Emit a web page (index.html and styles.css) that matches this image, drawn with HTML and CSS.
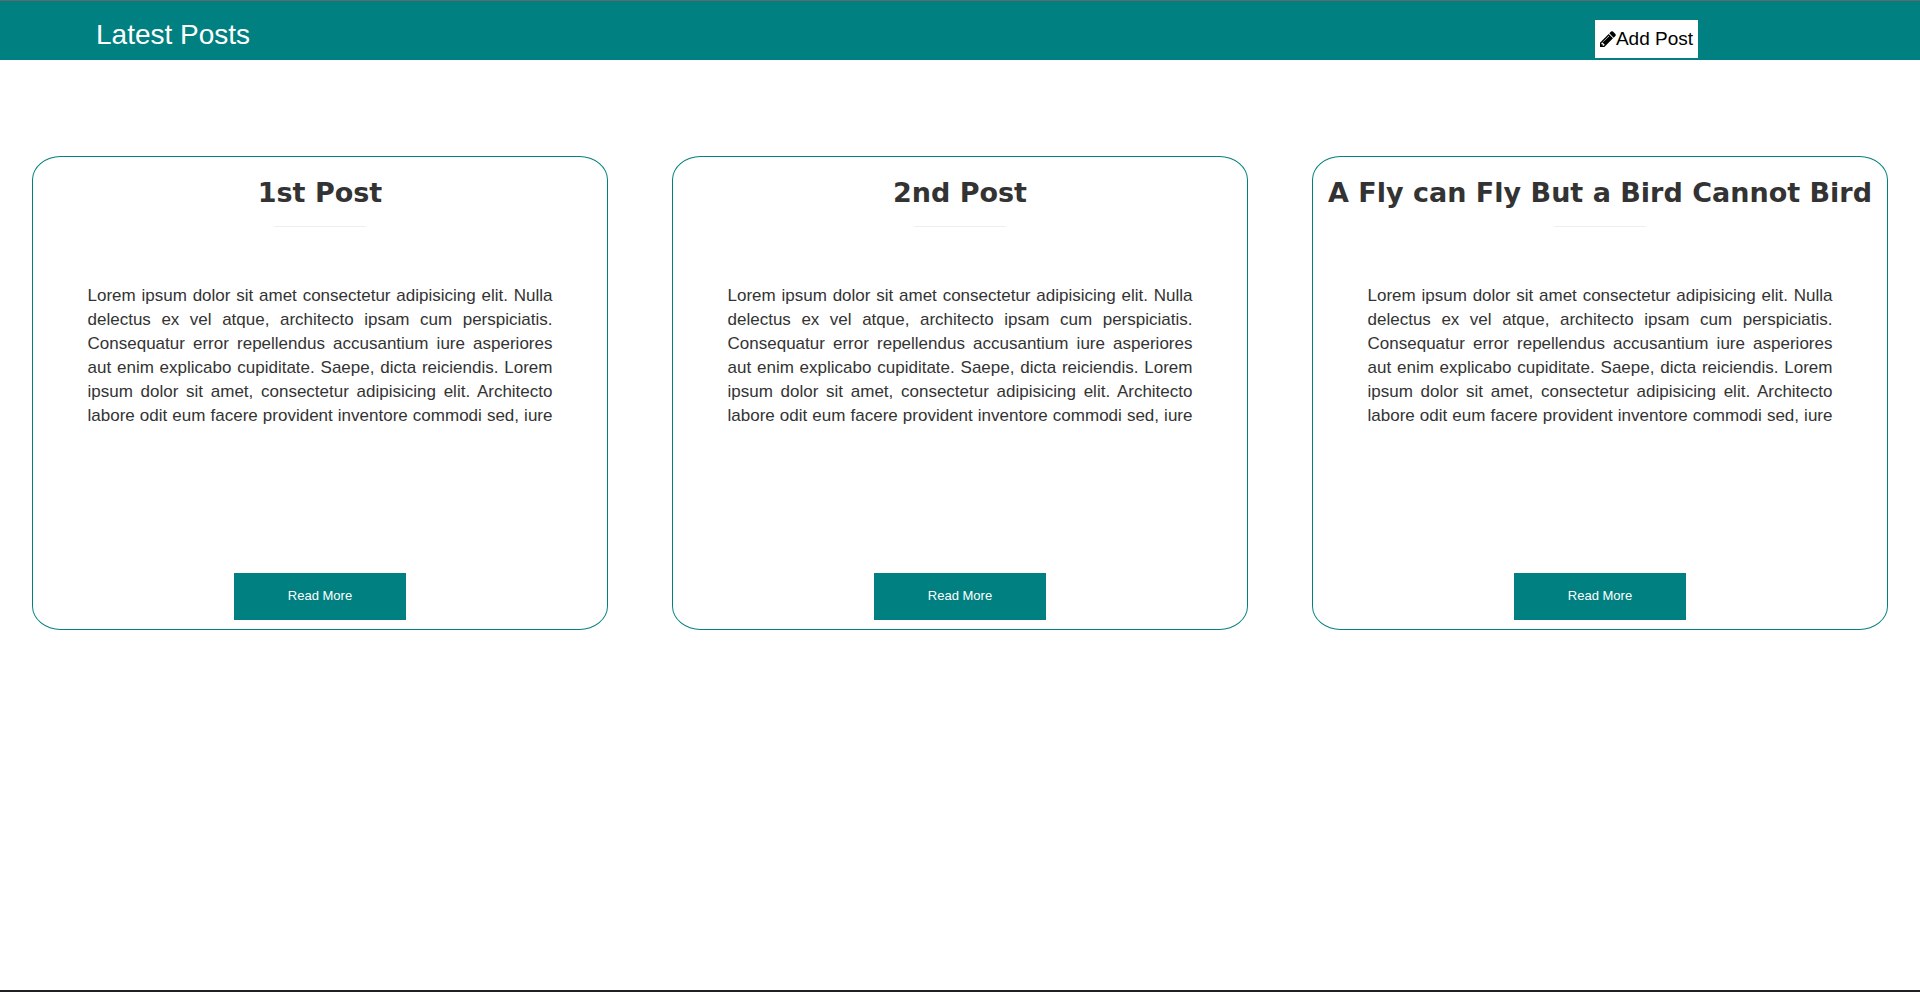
FILE: index.html
```html
<!DOCTYPE html>
<html lang="en">
<head>
<meta charset="utf-8">
<title>Latest Posts</title>
<link rel="stylesheet" href="styles.css">
</head>
<body>
<header class="topbar">
  <h1 class="topbar-title">Latest Posts</h1>
  <a class="add-post" href="#"><svg class="icon" viewBox="128 128 1536 1536" aria-hidden="true"><path fill="currentColor" d="M491 1536l91-91-235-235-91 91v107h128v128h107zm523-928q0-22-22-22-10 0-17 7l-542 542q-7 7-7 17 0 22 22 22 10 0 17-7l542-542q7-7 7-17zm-54-192l416 416-832 832h-416v-416zm683 96q0 53-37 90l-166 166-416-416 166-165q36-38 90-38 53 0 91 38l235 234q37 39 37 91z"/></svg>Add Post</a>
</header>
<main class="posts">
  <article class="card">
    <h2 class="card-title">1st Post</h2>
    <hr class="rule">
    <p class="card-text">Lorem ipsum dolor sit amet consectetur adipisicing elit. Nulla delectus ex vel atque, architecto ipsam cum perspiciatis. Consequatur error repellendus accusantium iure asperiores aut enim explicabo cupiditate. Saepe, dicta reiciendis. Lorem ipsum dolor sit amet, consectetur adipisicing elit. Architecto labore odit eum facere provident inventore commodi sed, iure</p>
    <button class="read-more" type="button">Read More</button>
  </article>
  <article class="card">
    <h2 class="card-title">2nd Post</h2>
    <hr class="rule">
    <p class="card-text">Lorem ipsum dolor sit amet consectetur adipisicing elit. Nulla delectus ex vel atque, architecto ipsam cum perspiciatis. Consequatur error repellendus accusantium iure asperiores aut enim explicabo cupiditate. Saepe, dicta reiciendis. Lorem ipsum dolor sit amet, consectetur adipisicing elit. Architecto labore odit eum facere provident inventore commodi sed, iure</p>
    <button class="read-more" type="button">Read More</button>
  </article>
  <article class="card">
    <h2 class="card-title">A Fly can Fly But a Bird Cannot Bird</h2>
    <hr class="rule">
    <p class="card-text">Lorem ipsum dolor sit amet consectetur adipisicing elit. Nulla delectus ex vel atque, architecto ipsam cum perspiciatis. Consequatur error repellendus accusantium iure asperiores aut enim explicabo cupiditate. Saepe, dicta reiciendis. Lorem ipsum dolor sit amet, consectetur adipisicing elit. Architecto labore odit eum facere provident inventore commodi sed, iure</p>
    <button class="read-more" type="button">Read More</button>
  </article>
</main>
</body>
</html>
```
FILE: styles.css
```css
* {
  box-sizing: border-box;
}

body {
  margin: 0;
  min-height: 100vh;
  display: flex;
  flex-direction: column;
  border-bottom: 2px solid #202124;
  background: #fff;
  color: #333;
  font-family: "Liberation Sans", Arial, sans-serif;
}

.topbar {
  display: flex;
  justify-content: space-between;
  align-items: flex-start;
  height: 60px;
  padding: 19px 222px 0 5%;
  border-top: 1px solid #666;
  background: #008080;
}

.topbar-title {
  margin: 0;
  color: #fff;
  font-size: 28px;
  font-weight: 400;
  line-height: 30px;
}

.add-post {
  display: flex;
  align-items: center;
  padding: 8px 5px;
  background: #fff;
  color: #000;
  font-size: 19px;
  line-height: 22px;
  text-decoration: none;
}

.icon {
  width: 16px;
  height: 16px;
}

.posts {
  display: grid;
  grid-template-columns: repeat(3, 1fr);
  padding-top: 96px;
}

.card {
  display: flex;
  flex-direction: column;
  align-items: center;
  margin: 0 5%;
  padding: 16px 0 9px;
  border: 1px solid #008080;
  border-radius: 5%;
}

.card-title {
  margin: 0;
  font-family: "Arial Black", "DejaVu Sans", sans-serif;
  font-size: 27px;
  font-weight: 900;
  line-height: 40px;
  white-space: nowrap;
}

.rule {
  width: 16%;
  margin: 13px 0 0;
  border: 0;
  border-top: 1px solid #eee;
}

.card-text {
  width: 81%;
  min-height: 144px;
  margin: 57px 0 145px;
  font-size: 17px;
  line-height: 24px;
  text-align: justify;
  text-align-last: justify;
}

.read-more {
  width: 30%;
  padding: 15px 0 17px;
  border: 0;
  background: #008080;
  color: #fff;
  font-family: inherit;
  font-size: 13px;
  font-weight: 500;
  line-height: 15px;
}
```
